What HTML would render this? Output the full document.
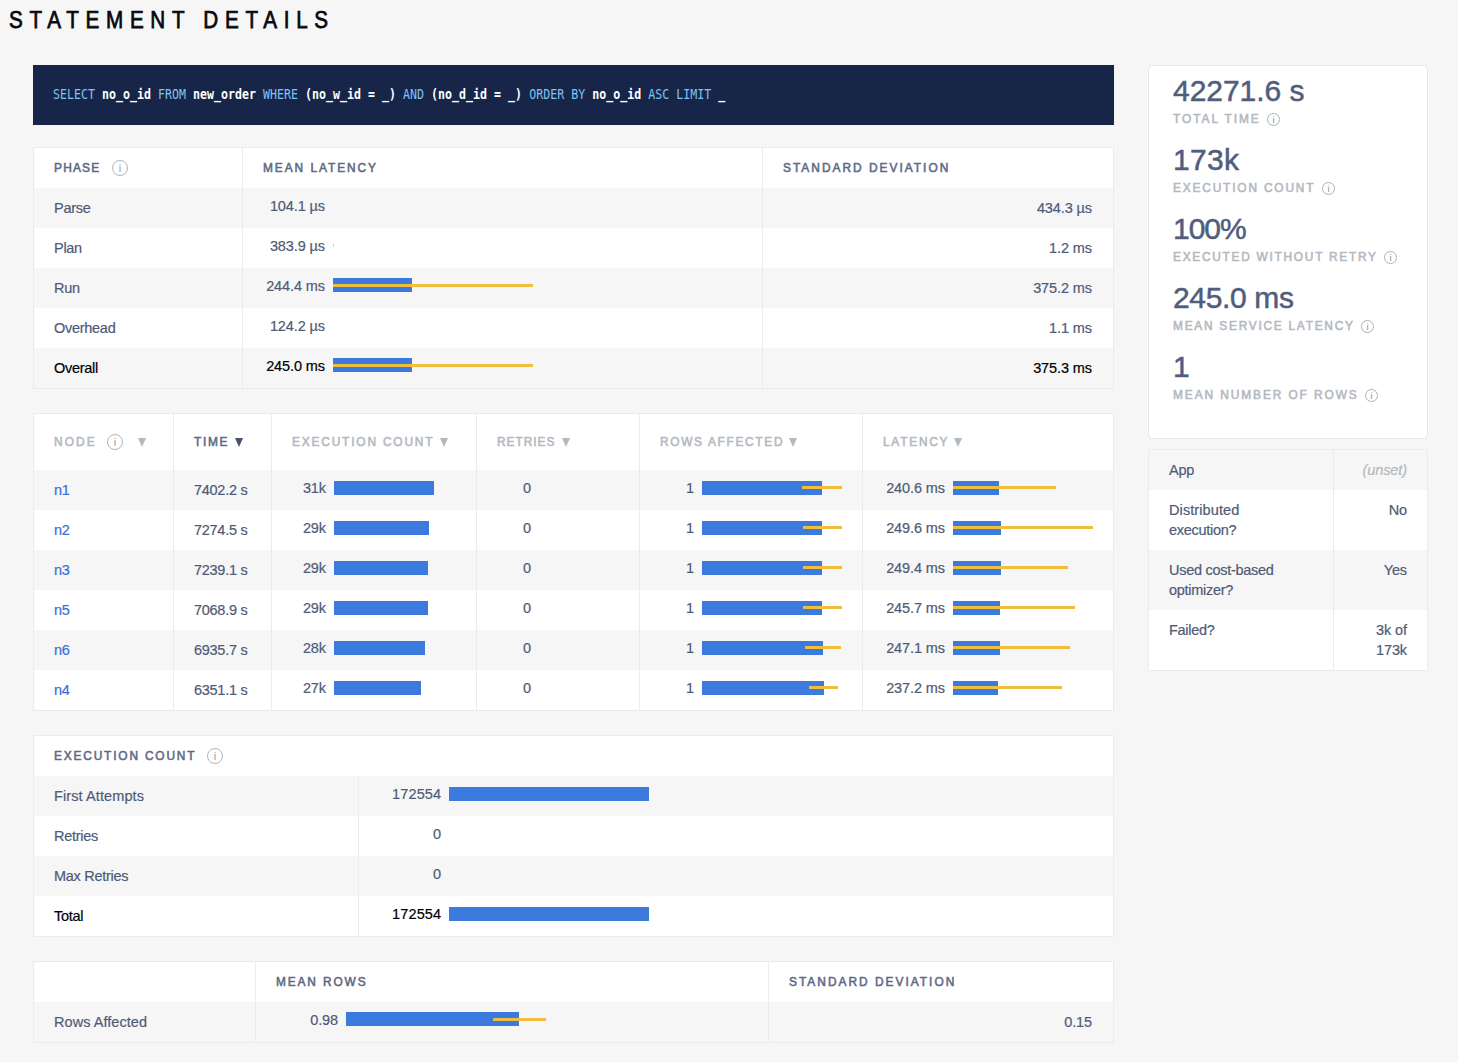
<!DOCTYPE html>
<html lang="en"><head><meta charset="utf-8"><title>Statement Details</title>
<style>
*{box-sizing:border-box;margin:0;padding:0}
html,body{width:1458px;height:1062px;overflow:hidden;background:#f6f6f6;font-family:"Liberation Sans",sans-serif;color:#4f5b76;}
h1{position:absolute;left:8.5px;top:5.5px;font-size:24px;line-height:28px;font-weight:400;letter-spacing:7.8px;color:#05070d;white-space:nowrap;-webkit-text-stroke:0.75px #05070d;transform:scaleX(.86);transform-origin:0 50%}
.sql{position:absolute;left:33px;top:65px;width:1081px;height:60px;background:#172648;color:#fff;font-family:"DejaVu Sans Mono","Liberation Mono",monospace;font-size:11.6px;line-height:60px;white-space:pre}
.sql span.t{position:absolute;left:20px;top:-1px;letter-spacing:0.02px;font-weight:700;transform:scaleY(1.18);transform-origin:0 50%}
.sql i{font-style:normal;color:#7fc4f4;font-weight:400}
.tbl{position:absolute;left:33px;width:1081px;background:#fff;border:1px solid #ebebeb;}
.row{position:absolute;left:0;width:1079px;height:40px}
.row.s{background:#f6f6f6}
.vl{position:absolute;top:0;bottom:0;width:1px;background:#ebebeb;z-index:2}
.c{position:absolute;white-space:nowrap;font-size:14.5px;line-height:20px;letter-spacing:-0.28px;-webkit-text-stroke:0.2px currentColor}
.r{text-align:right;letter-spacing:-0.1px}
.h{position:absolute;white-space:nowrap;font-size:12px;line-height:16px;letter-spacing:2.2px;color:#5e6a85;font-weight:400;-webkit-text-stroke:0.55px currentColor;transform:scaleX(0.99);transform-origin:0 50%}
.h.l{color:#b4b8bf}
.b{color:#000}
.bar{position:absolute;height:14px;background:#3d7ade}
.dev{position:absolute;height:3px;background:#f1bd3d}
.info{position:absolute;width:16px;height:16px;border:1px solid #b2b4b6;border-radius:50%;color:#9c9ea2;font-size:11px;line-height:14px;text-align:center;font-weight:400;letter-spacing:0}
.a{color:#3b6fd6}
.card{position:absolute;left:1148px;top:65px;width:280px;height:374px;background:#fff;border:1px solid #e7e7e7;border-radius:4px}
.big{position:absolute;left:24px;font-size:30px;line-height:34px;letter-spacing:-0.6px;color:#505d7c;white-space:nowrap;-webkit-text-stroke:0.5px currentColor}
.sm{position:absolute;left:24px;font-size:12px;line-height:16px;letter-spacing:2.2px;color:#b4b8bf;font-weight:400;-webkit-text-stroke:0.55px currentColor;white-space:nowrap;transform:scaleX(0.99);transform-origin:0 50%}
.sinfo{position:absolute;width:13px;height:13px;border:1px solid #aeb1b4;border-radius:50%;color:#8d9095;font-size:9.5px;line-height:11px;text-align:center;font-weight:400;letter-spacing:0}
.tri{position:absolute;width:0;height:0;border-left:4.5px solid transparent;border-right:4.5px solid transparent;border-top:9px solid #b4b8bf}
.u{font-style:italic;color:#b4b8bf}
</style></head>
<body>
<h1>STATEMENT DETAILS</h1>
<div class="sql"><span class="t"><i>SELECT</i> no_o_id <i>FROM</i> new_order <i>WHERE</i> (no_w_id = _) <i>AND</i> (no_d_id = _) <i>ORDER BY</i> no_o_id <i>ASC LIMIT</i> _</span></div>
<div class="tbl" style="top:147px;height:242px">
<div class="vl" style="left:208px"></div><div class="vl" style="left:728px"></div>
<div class="h" style="left:20px;top:12px;letter-spacing:1.23px">PHASE</div><div class="info" style="left:78px;top:12px">i</div>
<div class="h" style="left:229px;top:12px;letter-spacing:1.97px">MEAN LATENCY</div>
<div class="h" style="left:749px;top:12px;letter-spacing:2.04px">STANDARD DEVIATION</div>
<div class="row s" style="top:40px">
<div class="c" style="left:20px;top:10px">Parse</div>
<div class="c r" style="left:208px;width:83px;top:8px">104.1 µs</div>
<div class="c r" style="left:728px;width:330px;top:10px">434.3 µs</div>
</div>
<div class="row" style="top:80px">
<div class="c" style="left:20px;top:10px">Plan</div>
<div class="c r" style="left:208px;width:83px;top:8px">383.9 µs</div>
<div class="dev" style="left:299px;top:16px;width:1px;opacity:.7"></div>
<div class="c r" style="left:728px;width:330px;top:10px">1.2 ms</div>
</div>
<div class="row s" style="top:120px">
<div class="c" style="left:20px;top:10px">Run</div>
<div class="c r" style="left:208px;width:83px;top:8px">244.4 ms</div>
<div class="bar" style="left:299px;top:10px;width:79px"></div><div class="dev" style="left:299px;top:16px;width:200px"></div>
<div class="c r" style="left:728px;width:330px;top:10px">375.2 ms</div>
</div>
<div class="row" style="top:160px">
<div class="c" style="left:20px;top:10px">Overhead</div>
<div class="c r" style="left:208px;width:83px;top:8px">124.2 µs</div>
<div class="c r" style="left:728px;width:330px;top:10px">1.1 ms</div>
</div>
<div class="row s" style="top:200px">
<div class="c b" style="left:20px;top:10px">Overall</div>
<div class="c r b" style="left:208px;width:83px;top:8px">245.0 ms</div>
<div class="bar" style="left:299px;top:10px;width:79px"></div><div class="dev" style="left:299px;top:16px;width:200px"></div>
<div class="c r b" style="left:728px;width:330px;top:10px">375.3 ms</div>
</div>
</div>
<div class="tbl" style="top:413px;height:298px">
<div class="vl" style="left:139px"></div>
<div class="vl" style="left:237px"></div>
<div class="vl" style="left:442px"></div>
<div class="vl" style="left:605px"></div>
<div class="vl" style="left:828px"></div>
<div class="h l" style="left:20px;top:20px;letter-spacing:2.12px">NODE</div><div class="info" style="left:73px;top:20px">i</div><div class="tri" style="left:103.5px;top:24px"></div>
<div class="h" style="left:160px;top:20px;letter-spacing:1.7px">TIME</div><div class="tri" style="left:201px;top:24px;border-top-color:#46536f"></div>
<div class="h l" style="left:258px;top:20px;letter-spacing:1.85px">EXECUTION COUNT</div><div class="tri" style="left:405.5px;top:24px"></div>
<div class="h l" style="left:463px;top:20px;letter-spacing:1.0px">RETRIES</div><div class="tri" style="left:527.5px;top:24px"></div>
<div class="h l" style="left:626px;top:20px;letter-spacing:1.7px">ROWS AFFECTED</div><div class="tri" style="left:755px;top:24px"></div>
<div class="h l" style="left:849px;top:20px;letter-spacing:1.78px">LATENCY</div><div class="tri" style="left:920px;top:24px"></div>
<div class="row s" style="top:56px">
<div class="c a" style="left:20px;top:10px">n1</div>
<div class="c" style="left:160px;top:10px">7402.2 s</div>
<div class="c r" style="left:237px;width:55px;top:8px">31k</div><div class="bar" style="left:300px;top:11px;width:100px"></div>
<div class="c r" style="left:442px;width:55px;top:8px">0</div>
<div class="c r" style="left:605px;width:55px;top:8px">1</div><div class="bar" style="left:668px;top:11px;width:120px"></div><div class="dev" style="left:768px;top:16px;width:40px"></div>
<div class="c r" style="left:828px;width:83px;top:8px">240.6 ms</div><div class="bar" style="left:919px;top:11px;width:46px"></div><div class="dev" style="left:919px;top:16px;width:103px"></div>
</div>
<div class="row" style="top:96px">
<div class="c a" style="left:20px;top:10px">n2</div>
<div class="c" style="left:160px;top:10px">7274.5 s</div>
<div class="c r" style="left:237px;width:55px;top:8px">29k</div><div class="bar" style="left:300px;top:11px;width:95px"></div>
<div class="c r" style="left:442px;width:55px;top:8px">0</div>
<div class="c r" style="left:605px;width:55px;top:8px">1</div><div class="bar" style="left:668px;top:11px;width:120px"></div><div class="dev" style="left:769px;top:16px;width:39px"></div>
<div class="c r" style="left:828px;width:83px;top:8px">249.6 ms</div><div class="bar" style="left:919px;top:11px;width:48px"></div><div class="dev" style="left:919px;top:16px;width:140px"></div>
</div>
<div class="row s" style="top:136px">
<div class="c a" style="left:20px;top:10px">n3</div>
<div class="c" style="left:160px;top:10px">7239.1 s</div>
<div class="c r" style="left:237px;width:55px;top:8px">29k</div><div class="bar" style="left:300px;top:11px;width:94px"></div>
<div class="c r" style="left:442px;width:55px;top:8px">0</div>
<div class="c r" style="left:605px;width:55px;top:8px">1</div><div class="bar" style="left:668px;top:11px;width:120px"></div><div class="dev" style="left:769px;top:16px;width:39px"></div>
<div class="c r" style="left:828px;width:83px;top:8px">249.4 ms</div><div class="bar" style="left:919px;top:11px;width:48px"></div><div class="dev" style="left:919px;top:16px;width:115px"></div>
</div>
<div class="row" style="top:176px">
<div class="c a" style="left:20px;top:10px">n5</div>
<div class="c" style="left:160px;top:10px">7068.9 s</div>
<div class="c r" style="left:237px;width:55px;top:8px">29k</div><div class="bar" style="left:300px;top:11px;width:94px"></div>
<div class="c r" style="left:442px;width:55px;top:8px">0</div>
<div class="c r" style="left:605px;width:55px;top:8px">1</div><div class="bar" style="left:668px;top:11px;width:120px"></div><div class="dev" style="left:769px;top:16px;width:39px"></div>
<div class="c r" style="left:828px;width:83px;top:8px">245.7 ms</div><div class="bar" style="left:919px;top:11px;width:47px"></div><div class="dev" style="left:919px;top:16px;width:122px"></div>
</div>
<div class="row s" style="top:216px">
<div class="c a" style="left:20px;top:10px">n6</div>
<div class="c" style="left:160px;top:10px">6935.7 s</div>
<div class="c r" style="left:237px;width:55px;top:8px">28k</div><div class="bar" style="left:300px;top:11px;width:91px"></div>
<div class="c r" style="left:442px;width:55px;top:8px">0</div>
<div class="c r" style="left:605px;width:55px;top:8px">1</div><div class="bar" style="left:668px;top:11px;width:121px"></div><div class="dev" style="left:771px;top:16px;width:36px"></div>
<div class="c r" style="left:828px;width:83px;top:8px">247.1 ms</div><div class="bar" style="left:919px;top:11px;width:47px"></div><div class="dev" style="left:919px;top:16px;width:117px"></div>
</div>
<div class="row" style="top:256px">
<div class="c a" style="left:20px;top:10px">n4</div>
<div class="c" style="left:160px;top:10px">6351.1 s</div>
<div class="c r" style="left:237px;width:55px;top:8px">27k</div><div class="bar" style="left:300px;top:11px;width:87px"></div>
<div class="c r" style="left:442px;width:55px;top:8px">0</div>
<div class="c r" style="left:605px;width:55px;top:8px">1</div><div class="bar" style="left:668px;top:11px;width:122px"></div><div class="dev" style="left:775px;top:16px;width:29px"></div>
<div class="c r" style="left:828px;width:83px;top:8px">237.2 ms</div><div class="bar" style="left:919px;top:11px;width:45px"></div><div class="dev" style="left:919px;top:16px;width:109px"></div>
</div>
</div>
<div class="tbl" style="top:735px;height:202px">
<div class="vl" style="left:324px;top:40px"></div>
<div class="h" style="left:20px;top:12px;letter-spacing:1.85px">EXECUTION COUNT</div><div class="info" style="left:173px;top:12px">i</div>
<div class="row s" style="top:40px">
<div class="c" style="left:20px;top:10px;letter-spacing:0.1px">First Attempts</div>
<div class="c r" style="left:324px;width:83.3px;top:8px;letter-spacing:0.15px">172554</div>
<div class="bar" style="left:415px;top:11px;width:200px"></div>
</div>
<div class="row" style="top:80px">
<div class="c" style="left:20px;top:10px">Retries</div>
<div class="c r" style="left:324px;width:83.3px;top:8px;letter-spacing:0.15px">0</div>
</div>
<div class="row s" style="top:120px">
<div class="c" style="left:20px;top:10px">Max Retries</div>
<div class="c r" style="left:324px;width:83.3px;top:8px;letter-spacing:0.15px">0</div>
</div>
<div class="row" style="top:160px">
<div class="c b" style="left:20px;top:10px">Total</div>
<div class="c r b" style="left:324px;width:83.3px;top:8px;letter-spacing:0.15px">172554</div>
<div class="bar" style="left:415px;top:11px;width:200px"></div>
</div>
</div>
<div class="tbl" style="top:961px;height:82px">
<div class="vl" style="left:221px"></div><div class="vl" style="left:734px"></div>
<div class="h" style="left:242px;top:12px;letter-spacing:1.89px">MEAN ROWS</div>
<div class="h" style="left:755px;top:12px;letter-spacing:2.04px">STANDARD DEVIATION</div>
<div class="row s" style="top:40px">
<div class="c" style="left:20px;top:10px;letter-spacing:0.05px">Rows Affected</div>
<div class="c r" style="left:221px;width:83px;top:8px">0.98</div>
<div class="bar" style="left:312px;top:10px;width:173px"></div><div class="dev" style="left:459px;top:16px;width:53px"></div>
<div class="c r" style="left:734px;width:324px;top:10px">0.15</div>
</div></div>
<div class="card">
<div class="big" style="top:8px;letter-spacing:-0.05px">42271.6 s</div>
<div class="sm" style="left:24px;top:45px;letter-spacing:1.97px">TOTAL TIME</div><div class="sinfo" style="left:118px;top:47px">i</div>
<div class="big" style="top:77px;letter-spacing:0.35px">173k</div>
<div class="sm" style="left:24px;top:114px;letter-spacing:1.85px">EXECUTION COUNT</div><div class="sinfo" style="left:173px;top:116px">i</div>
<div class="big" style="top:146px;letter-spacing:-1.0px">100%</div>
<div class="sm" style="left:24px;top:183px;letter-spacing:1.75px">EXECUTED WITHOUT RETRY</div><div class="sinfo" style="left:235px;top:185px">i</div>
<div class="big" style="top:215px;letter-spacing:-0.35px">245.0 ms</div>
<div class="sm" style="left:24px;top:252px;letter-spacing:1.76px">MEAN SERVICE LATENCY</div><div class="sinfo" style="left:212px;top:254px">i</div>
<div class="big" style="top:284px;letter-spacing:0px">1</div>
<div class="sm" style="left:24px;top:321px;letter-spacing:1.94px">MEAN NUMBER OF ROWS</div><div class="sinfo" style="left:216px;top:323px">i</div>
</div>
<div class="tbl" style="left:1148px;top:449px;width:280px;height:222px">
<div class="vl" style="left:184px"></div>
<div class="row s" style="top:0px;height:40px;width:278px">
<div class="c" style="left:20px;top:10px;white-space:normal">App</div>
<div class="c r" style="left:184px;width:74px;top:10px;white-space:normal"><span class="u">(unset)</span></div>
</div>
<div class="row" style="top:40px;height:60px;width:278px">
<div class="c" style="left:20px;top:10px;white-space:normal"><span style="letter-spacing:0.1px">Distributed</span><br>execution?</div>
<div class="c r" style="left:184px;width:74px;top:10px;white-space:normal">No</div>
</div>
<div class="row s" style="top:100px;height:60px;width:278px">
<div class="c" style="left:20px;top:10px;white-space:normal">Used cost-based<br>optimizer?</div>
<div class="c r" style="left:184px;width:74px;top:10px;white-space:normal">Yes</div>
</div>
<div class="row" style="top:160px;height:60px;width:278px">
<div class="c" style="left:20px;top:10px;white-space:normal">Failed?</div>
<div class="c r" style="left:184px;width:74px;top:10px;white-space:normal">3k of<br>173k</div>
</div>
</div>
</body></html>
